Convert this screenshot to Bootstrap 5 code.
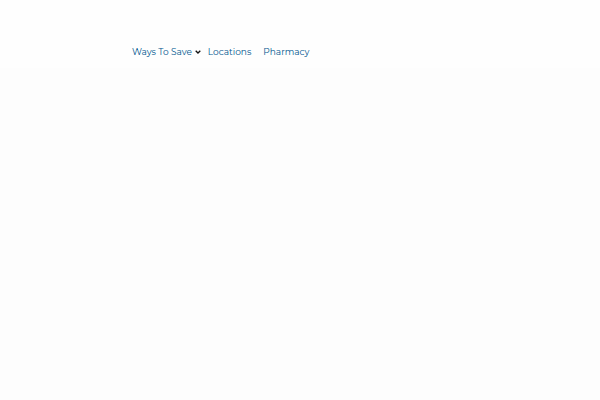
<!DOCTYPE html>
<html lang="en">
<head>
<meta charset="utf-8">
<meta name="viewport" content="width=device-width, initial-scale=1">
<title>Store</title>
<link href="https://cdn.jsdelivr.net/npm/bootstrap@5.3.0/dist/css/bootstrap.min.css" rel="stylesheet">
<style>
body { font-family: Montserrat, Inter, "Open Sans", sans-serif; background: #fdfdfd; }
.site-header { background: #fefefe; padding: 46px 0 10px 132px; }
.site-link { color: #00568f; font-size: 9px; line-height: 12px; font-weight: 400; text-decoration: none; }
.menu-toggle { width: 6px; height: 12px; margin: 0 7px 0 3px; }
.gap-link { margin-left: 12px; }
</style>
</head>
<body>
<header class="site-header">
<nav class="d-flex align-items-center" aria-label="Main">
<a class="site-link" href="#">Ways To Save</a>
<button class="menu-toggle btn p-0 border-0 d-flex align-items-center" type="button" aria-label="Show Ways To Save menu">
<svg width="6" height="4" viewBox="0 0 6 4" fill="none" stroke="#111" stroke-width="1.3" aria-hidden="true"><path d="M.7.7 3 3 5.3.7"/></svg>
</button>
<a class="site-link" href="#">Locations</a>
<a class="site-link gap-link" href="#">Pharmacy</a>
</nav>
</header>
<main></main>
<script src="https://cdn.jsdelivr.net/npm/bootstrap@5.3.0/dist/js/bootstrap.bundle.min.js"></script>
</body>
</html>
